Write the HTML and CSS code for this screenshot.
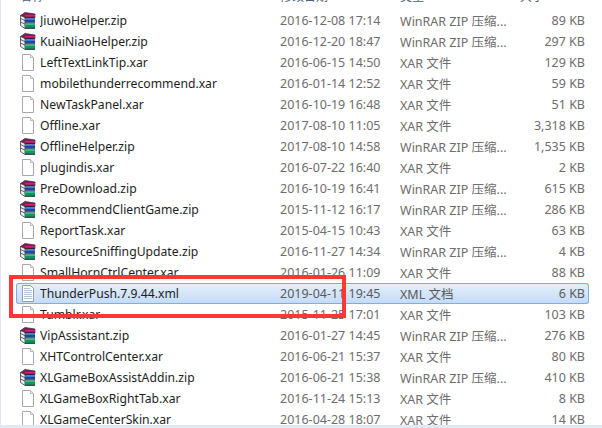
FILE: index.html
```html
<!DOCTYPE html>
<html lang="zh">
<head>
<meta charset="utf-8">
<title>Files</title>
<link rel="stylesheet" href="styles.css">
</head>
<body>
<svg class="defs" width="0" height="0" aria-hidden="true">
<defs>
<symbol id="doc" viewBox="0 0 16 17"><path d="M2.500 .5h8l3 3v13h-11z" fill="#fff" stroke="#a8a8a8"/><path d="M10.500 .5v3h3" fill="#ececec" stroke="#bbb"/></symbol>
<symbol id="xml" viewBox="0 0 16 17"><path d="M2.500 .5h8l3 3v13h-11z" fill="#fff" stroke="#9c9c9c"/><path d="M4 3.500h6M4 5.500h8M4 7.500h8M4 9.500h8M4 11.500h8M4 13.500h8" stroke="#a9c4de"/></symbol>
<symbol id="rar" viewBox="0 0 16 17"><path d="M.5 3.500 5 .5l10 1.500v3.500H5z" fill="#8a1a58" stroke="#2b2b2b" stroke-width=".7"/><path d="M5 3h10v1.500H5z" fill="#d81b80"/><path d="M.5 3.500 5 5.500v11l-4.500-3z" fill="#ececec" stroke="#2b2b2b" stroke-width=".7"/><path d="M5 6.500h10V10H5z" fill="#1f45ad"/><path d="M5 7h10v1H5z" fill="#3f78dc"/><path d="M5 11.500h10V16H5z" fill="#0f9464"/><path d="M5 12h10v1H5z" fill="#2cc486"/><path d="M5 5.800h10M5 10.800h10M5 16.300h10" stroke="#1d1d1d"/><path d="M.5 6.500l4.500 2.200M.5 10l4.500 2.200" stroke="#2b2b2b" stroke-width=".7"/></symbol>
</defs>
</svg>
<main class="window">
<div class="row head"><span class="name">名称</span><span class="date">修改日期</span><span class="type">类型</span><span class="size">大小</span></div>
<div class="row"><svg class="ico"><use href="#rar"/></svg><span class="name">JiuwoHelper.zip</span><span class="date">2016-12-08 17:14</span><span class="type">WinRAR ZIP 压缩...</span><span class="size">89 KB</span></div>
<div class="row"><svg class="ico"><use href="#rar"/></svg><span class="name">KuaiNiaoHelper.zip</span><span class="date">2016-12-20 18:47</span><span class="type">WinRAR ZIP 压缩...</span><span class="size">297 KB</span></div>
<div class="row"><svg class="ico"><use href="#doc"/></svg><span class="name">LeftTextLinkTip.xar</span><span class="date">2016-06-15 14:50</span><span class="type">XAR 文件</span><span class="size">129 KB</span></div>
<div class="row"><svg class="ico"><use href="#doc"/></svg><span class="name">mobilethunderrecommend.xar</span><span class="date">2016-01-14 12:52</span><span class="type">XAR 文件</span><span class="size">59 KB</span></div>
<div class="row"><svg class="ico"><use href="#doc"/></svg><span class="name">NewTaskPanel.xar</span><span class="date">2016-10-19 16:48</span><span class="type">XAR 文件</span><span class="size">51 KB</span></div>
<div class="row"><svg class="ico"><use href="#doc"/></svg><span class="name">Offline.xar</span><span class="date">2017-08-10 11:05</span><span class="type">XAR 文件</span><span class="size">3,318 KB</span></div>
<div class="row"><svg class="ico"><use href="#rar"/></svg><span class="name">OfflineHelper.zip</span><span class="date">2017-08-10 14:58</span><span class="type">WinRAR ZIP 压缩...</span><span class="size">1,535 KB</span></div>
<div class="row"><svg class="ico"><use href="#doc"/></svg><span class="name">plugindis.xar</span><span class="date">2016-07-22 16:40</span><span class="type">XAR 文件</span><span class="size">2 KB</span></div>
<div class="row"><svg class="ico"><use href="#rar"/></svg><span class="name">PreDownload.zip</span><span class="date">2016-10-19 16:41</span><span class="type">WinRAR ZIP 压缩...</span><span class="size">615 KB</span></div>
<div class="row"><svg class="ico"><use href="#rar"/></svg><span class="name">RecommendClientGame.zip</span><span class="date">2015-11-12 16:17</span><span class="type">WinRAR ZIP 压缩...</span><span class="size">286 KB</span></div>
<div class="row"><svg class="ico"><use href="#doc"/></svg><span class="name">ReportTask.xar</span><span class="date">2015-04-15 10:43</span><span class="type">XAR 文件</span><span class="size">63 KB</span></div>
<div class="row"><svg class="ico"><use href="#rar"/></svg><span class="name">ResourceSniffingUpdate.zip</span><span class="date">2016-11-27 14:34</span><span class="type">WinRAR ZIP 压缩...</span><span class="size">4 KB</span></div>
<div class="row"><svg class="ico"><use href="#doc"/></svg><span class="name">SmallHornCtrlCenter.xar</span><span class="date">2016-01-26 11:09</span><span class="type">XAR 文件</span><span class="size">88 KB</span></div>
<div class="row selected"><svg class="ico"><use href="#xml"/></svg><span class="name">ThunderPush.7.9.44.xml</span><span class="date">2019-04-11 19:45</span><span class="type">XML 文档</span><span class="size">6 KB</span></div>
<div class="row"><svg class="ico"><use href="#doc"/></svg><span class="name">Tumblr.xar</span><span class="date">2015-11-25 17:01</span><span class="type">XAR 文件</span><span class="size">103 KB</span></div>
<div class="row"><svg class="ico"><use href="#rar"/></svg><span class="name">VipAssistant.zip</span><span class="date">2016-01-27 14:45</span><span class="type">WinRAR ZIP 压缩...</span><span class="size">276 KB</span></div>
<div class="row"><svg class="ico"><use href="#doc"/></svg><span class="name">XHTControlCenter.xar</span><span class="date">2016-06-21 15:37</span><span class="type">XAR 文件</span><span class="size">80 KB</span></div>
<div class="row"><svg class="ico"><use href="#rar"/></svg><span class="name">XLGameBoxAssistAddin.zip</span><span class="date">2016-06-21 15:38</span><span class="type">WinRAR ZIP 压缩...</span><span class="size">410 KB</span></div>
<div class="row"><svg class="ico"><use href="#doc"/></svg><span class="name">XLGameBoxRightTab.xar</span><span class="date">2016-11-24 15:13</span><span class="type">XAR 文件</span><span class="size">8 KB</span></div>
<div class="row"><svg class="ico"><use href="#doc"/></svg><span class="name">XLGameCenterSkin.xar</span><span class="date">2016-04-28 18:07</span><span class="type">XAR 文件</span><span class="size">14 KB</span></div>
<div class="annotation"></div>
</main>
</body>
</html>
```
FILE: styles.css
```css
html, body { margin: 0; padding: 0; background: #fff; }
.defs { position: absolute; }
.window { position: relative; width: 602px; height: 428px; overflow: hidden; box-sizing: border-box; padding-left: 15px; background: #fff; border-left: 1px solid #dbe9f6; border-bottom: 3px solid #dfeaf6; font: 12.5px "Noto Sans", "Noto Sans CJK SC", sans-serif; color: #1e1e1e; }
.row { display: flex; align-items: center; width: 573px; height: 21px; padding-left: 4px; box-sizing: border-box; }
.head { height: 10px; margin-top: -9px; margin-bottom: 9px; color: #4c607a; font-size: 12px; }
.head .name { font-size: 12px; width: 260px; overflow: visible; }
.head .name, .head .date, .head .type, .head .size { position: relative; height: 19px; color: #4c607a; }
.head .size { text-align: left; box-sizing: border-box; }
.head .name::after, .head .date::after, .head .type::after, .head .size::after { content: ""; position: absolute; top: 0; right: 7px; width: 1px; height: 9px; background: #e6ecf2; }
.head .size::after { right: -8px; }
.ico { width: 16px; height: 17px; flex: none; margin-right: 4px; }
.name { width: 240px; font-size: 12.2px; white-space: nowrap; overflow: hidden; flex: none; }
.date { width: 120px; flex: none; color: #6d6d6d; white-space: nowrap; }
.type { width: 120px; flex: none; color: #6d6d6d; white-space: nowrap; }
.size { width: 65px; flex: none; color: #6d6d6d; text-align: right; white-space: nowrap; }
.selected { box-shadow: inset 0 0 0 1px #84acdd; border-radius: 3px; background: linear-gradient(#e6f0fc, #c2dbf8); }
.selected .date, .selected .type, .selected .size { color: #5a5a5a; }
.annotation { position: absolute; left: 8px; top: 275px; width: 337px; height: 43px; box-sizing: border-box; border: 4px solid #ff3636; }
```
